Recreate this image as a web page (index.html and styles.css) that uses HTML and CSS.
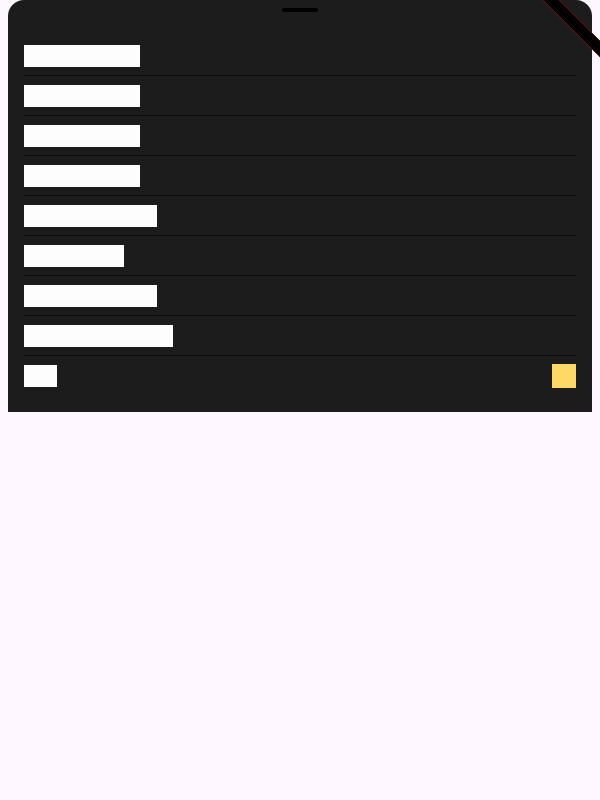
FILE: index.html
```html
<!DOCTYPE html>
<html>
<head>
<meta charset="utf-8">
<link rel="stylesheet" href="styles.css">
</head>
<body>
<div class="sheet">
  <div class="handle"></div>
  <div class="list">
    <div class="row"><div class="bar w7"></div></div>
    <div class="row"><div class="bar w7"></div></div>
    <div class="row"><div class="bar w7"></div></div>
    <div class="row"><div class="bar w7"></div></div>
    <div class="row"><div class="bar w8"></div></div>
    <div class="row"><div class="bar w6"></div></div>
    <div class="row"><div class="bar w8"></div></div>
    <div class="row"><div class="bar w9"></div></div>
    <div class="row last"><div class="bar w2"></div><div class="swatch"></div></div>
  </div>
</div>
<svg class="ribbon" width="60" height="60" viewBox="540 0 60 60">
  <polygon points="543,0 559,0 600,41 600,57" fill="#000"/>
  <line x1="543" y1="0" x2="600" y2="57" stroke="#7a0a0a" stroke-width="1"/>
  <line x1="559" y1="0" x2="600" y2="41" stroke="#7a0a0a" stroke-width="1"/>
</svg>
</body>
</html>
```
FILE: styles.css
```css
html, body {
  margin: 0;
  padding: 0;
  background: #fef7ff;
  font-family: "Liberation Sans", Arial, sans-serif;
}
body {
  width: 600px;
  height: 800px;
  position: relative;
  overflow: hidden;
}
.sheet {
  margin: 0 8px;
  background: #1c1c1c;
  border-radius: 16px 16px 0 0;
  padding: 8px 16px 16px;
}
.handle {
  width: 36px;
  height: 4px;
  border-radius: 2px;
  background: #000;
  margin: 0 auto;
}
.list {
  margin-top: 24px;
}
.row {
  display: flex;
  align-items: center;
  justify-content: space-between;
  padding: 9px 0 8px;
  border-bottom: 1px solid #0e0e0e;
}
.row.last {
  padding: 8px 0;
  border-bottom: none;
}
.bar {
  height: 22px;
  background: #fdfdfd;
}
.w2 { width: 33px; }
.w6 { width: 99.5px; }
.w7 { width: 116px; }
.w8 { width: 133px; }
.w9 { width: 149px; }
.swatch {
  width: 24px;
  height: 24px;
  background: #ffd966;
}
.ribbon {
  position: absolute;
  top: 0;
  right: 0;
}
```
